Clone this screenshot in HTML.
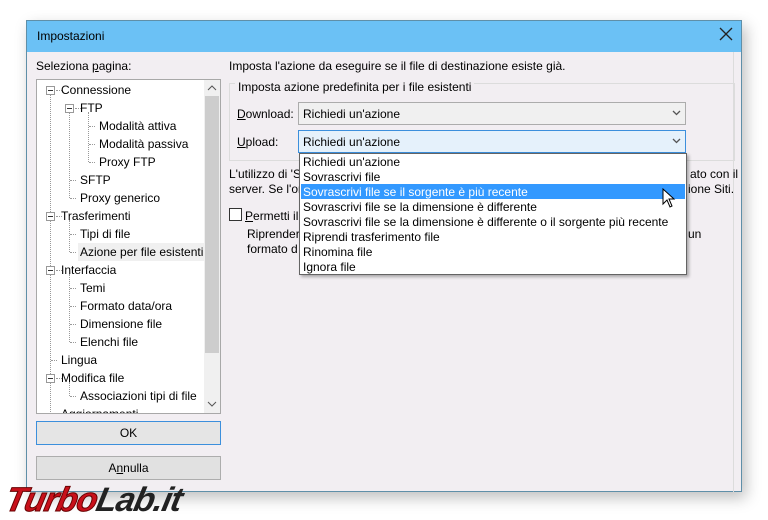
<!DOCTYPE html>
<html><head><meta charset="utf-8"><style>
*{margin:0;padding:0;box-sizing:border-box}
body{width:768px;height:518px;background:#fff;font-family:"Liberation Sans",sans-serif;font-size:12px;color:#000;position:relative;overflow:hidden}
.a{position:absolute;white-space:nowrap}
#win{left:26px;top:20px;width:716px;height:472px;background:#f2eef2;border:1px solid #5f8fa8;box-shadow:4px 6px 14px rgba(0,0,0,.25)}
#title{left:0;top:0;width:714px;height:31px;background:#6bc1f5}
.tree{left:36px;top:79px;width:185px;height:335px;background:#fff;border:1px solid #a8a8a8;overflow:hidden}
.sb{left:167px;top:0;width:16px;height:333px;background:#f0f0f0}
.thumb{left:168px;top:16px;width:14px;height:257px;background:#cdcdcd}
.row{position:absolute;height:18px;line-height:18px}
.pm{position:absolute;width:9px;height:9px;border:1px solid #999;background:#fff}
.pm:after{content:"";position:absolute;left:1px;top:3px;width:5px;height:1px;background:#333}
.dv{position:absolute;border-left:1px dotted #999}
.dh{position:absolute;border-top:1px dotted #999;width:6px}
.btn{left:36px;width:185px;height:24px;background:#e1e1e1;border:1px solid #adadad;text-align:center;line-height:22px}
.combo{left:298px;width:388px;height:23px;border:1px solid #acacac;background:#f0f0f0;padding-left:4px;line-height:22px}
.list{left:299px;top:153px;width:388px;height:122px;background:#fff;border:1px solid #646464;box-shadow:2px 2px 3px rgba(0,0,0,.3)}
.it{position:absolute;left:1px;width:384px;height:15px;line-height:16px;padding-left:2px}
u{text-decoration:underline}
</style></head><body>
<div class="a" id="win">
 <div class="a" id="title"></div>
 <div class="a" style="left:10px;top:8px">Impostazioni</div>
 <svg class="a" style="left:692px;top:6px" width="14" height="14"><path d="M1 1L13 13M13 1L1 13" stroke="#222" stroke-width="1.3"/></svg>
 <div class="a" style="left:202px;top:62px;width:506px;height:78px;border:1px solid #dcdcdc"></div>
 <div class="a" style="left:706px;top:31px;width:1px;height:440px;background:#dcdcdc"></div>
</div>
<div class="a" style="left:36px;top:59px">Seleziona <u>p</u>agina:</div>
<div class="a tree">
 <div class="a sb"></div><div class="a thumb"></div>
 <svg class="a" style="left:170px;top:4px" width="10" height="8"><path d="M1 6L5 2L9 6" stroke="#555" fill="none"/></svg>
 <svg class="a" style="left:170px;top:320px" width="10" height="8"><path d="M1 2L5 6L9 2" stroke="#555" fill="none"/></svg>
 <div class="dv" style="left:13px;top:14px;height:330px"></div>
 <div class="dv" style="left:32px;top:32px;height:86px"></div>
 <div class="dv" style="left:51px;top:32px;height:50px"></div>
 <div class="dv" style="left:32px;top:140px;height:32px"></div>
 <div class="dv" style="left:32px;top:194px;height:68px"></div>
 <div class="dv" style="left:32px;top:302px;height:14px"></div>
 <div class="dh" style="left:19px;top:10px"></div><div class="pm" style="left:9px;top:6px"></div>
 <div class="row" style="left:24px;top:1px">Connessione</div>
 <div class="dh" style="left:38px;top:28px"></div><div class="pm" style="left:28px;top:24px"></div>
 <div class="row" style="left:43px;top:19px">FTP</div>
 <div class="dh" style="left:52px;top:46px"></div><div class="row" style="left:62px;top:37px">Modalità attiva</div>
 <div class="dh" style="left:52px;top:64px"></div><div class="row" style="left:62px;top:55px">Modalità passiva</div>
 <div class="dh" style="left:52px;top:82px"></div><div class="row" style="left:62px;top:73px">Proxy FTP</div>
 <div class="dh" style="left:33px;top:100px"></div><div class="row" style="left:43px;top:91px">SFTP</div>
 <div class="dh" style="left:33px;top:118px"></div><div class="row" style="left:43px;top:109px">Proxy generico</div>
 <div class="dh" style="left:19px;top:136px"></div><div class="pm" style="left:9px;top:132px"></div>
 <div class="row" style="left:24px;top:127px">Trasferimenti</div>
 <div class="dh" style="left:33px;top:154px"></div><div class="row" style="left:43px;top:145px">Tipi di file</div>
 <div class="dh" style="left:33px;top:172px"></div><div class="row" style="left:41px;top:163px;background:#f0f0f0;padding:0 2px">Azione per file esistenti</div>
 <div class="dh" style="left:19px;top:190px"></div><div class="pm" style="left:9px;top:186px"></div>
 <div class="row" style="left:24px;top:181px">Interfaccia</div>
 <div class="dh" style="left:33px;top:208px"></div><div class="row" style="left:43px;top:199px">Temi</div>
 <div class="dh" style="left:33px;top:226px"></div><div class="row" style="left:43px;top:217px">Formato data/ora</div>
 <div class="dh" style="left:33px;top:244px"></div><div class="row" style="left:43px;top:235px">Dimensione file</div>
 <div class="dh" style="left:33px;top:262px"></div><div class="row" style="left:43px;top:253px">Elenchi file</div>
 <div class="dh" style="left:14px;top:280px"></div><div class="row" style="left:24px;top:271px">Lingua</div>
 <div class="dh" style="left:19px;top:298px"></div><div class="pm" style="left:9px;top:294px"></div>
 <div class="row" style="left:24px;top:289px">Modifica file</div>
 <div class="dh" style="left:33px;top:316px"></div><div class="row" style="left:43px;top:307px">Associazioni tipi di file</div>
 <div class="row" style="left:24px;top:325px">Aggiornamenti</div>
</div>
<div class="a btn" style="top:421px;border-color:#3c8fdc;background:#e5e5e5">OK</div>
<div class="a btn" style="top:456px">A<u>n</u>nulla</div>

<div class="a" style="left:229px;top:59px">Imposta l'azione da eseguire se il file di destinazione esiste già.</div>
<div class="a" style="left:235px;top:80px;background:#f2eef2;padding:0 3px">Imposta azione predefinita per i file esistenti</div>
<div class="a" style="left:237px;top:107px"><u>D</u>ownload:</div>
<div class="a combo" style="top:102px">Richiedi un'azione</div>
<svg class="a" style="left:672px;top:110px" width="9" height="6"><path d="M1 1L4.5 4.5L8 1" stroke="#555" fill="none" stroke-width="1.3"/></svg>
<div class="a" style="left:237px;top:135px"><u>U</u>pload:</div>
<div class="a combo" style="top:130px;border-color:#3c8fdc;background:#e5f1fb">Richiedi un'azione</div>
<svg class="a" style="left:672px;top:138px" width="9" height="6"><path d="M1 1L4.5 4.5L8 1" stroke="#555" fill="none" stroke-width="1.3"/></svg>

<div class="a" style="left:229px;top:167px">L'utilizzo di 'S</div>
<div class="a" style="left:690px;top:167px">ato con il</div>
<div class="a" style="left:229px;top:182px">server. Se l'or</div>
<div class="a" style="left:688px;top:182px">ione Siti.</div>
<div class="a" style="left:229px;top:208px;width:13px;height:13px;border:1px solid #333;background:#fff"></div>
<div class="a" style="left:245px;top:209px"><u>P</u>ermetti il</div>
<div class="a" style="left:247px;top:227px">Riprender</div>
<div class="a" style="left:688px;top:227px">un</div>
<div class="a" style="left:247px;top:242px">formato d</div>

<div class="a list">
 <div class="it" style="top:0">Richiedi un'azione</div>
 <div class="it" style="top:15px">Sovrascrivi file</div>
 <div class="it" style="top:30px;background:#3399ff;color:#fff">Sovrascrivi file se il sorgente è più recente</div>
 <div class="it" style="top:45px">Sovrascrivi file se la dimensione è differente</div>
 <div class="it" style="top:60px">Sovrascrivi file se la dimensione è differente o il sorgente più recente</div>
 <div class="it" style="top:75px">Riprendi trasferimento file</div>
 <div class="it" style="top:90px">Rinomina file</div>
 <div class="it" style="top:105px">Ignora file</div>
</div>
<svg class="a" style="left:662px;top:188px" width="14" height="22"><path d="M1 1L1 16L5 12L8 19L10 18L7 11L12 11Z" fill="#fff" stroke="#000"/></svg>

<div class="a" style="left:6px;top:481px;font-size:34px;font-weight:bold;font-style:italic;letter-spacing:-1px;transform:skewX(-12deg)"><span style="color:#c8101a;-webkit-text-stroke:1px #600">Turbo</span><span style="color:#222">Lab.it</span></div>
</body></html>
